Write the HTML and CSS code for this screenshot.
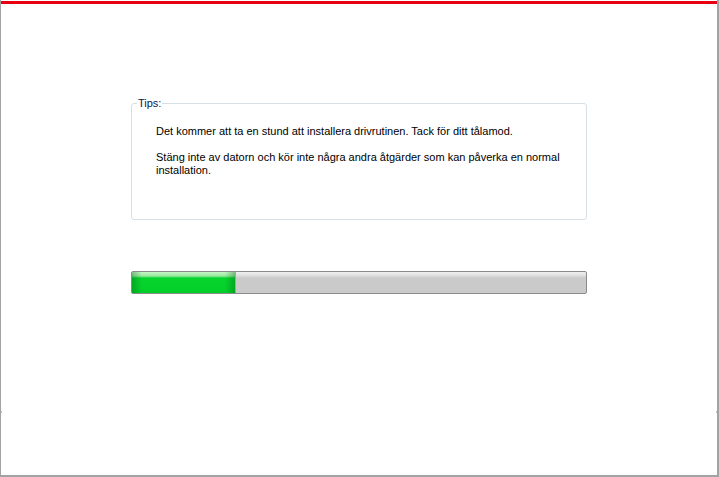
FILE: index.html
```html
<!DOCTYPE html>
<html>
<head>
<meta charset="utf-8">
<link rel="stylesheet" href="styles.css">
</head>
<body>
<div class="window">
  <div class="accent"></div>
  <div class="content">
    <fieldset class="tips">
      <legend>Tips:</legend>
      <p>Det kommer att ta en stund att installera drivrutinen. Tack för ditt tålamod.</p>
      <p>Stäng inte av datorn och kör inte några andra åtgärder som kan påverka en normal installation.</p>
    </fieldset>
    <div class="progress">
      <div class="fill" style="width:103px"></div>
    </div>
  </div>
  <div class="footer"></div>
</div>
</body>
</html>
```
FILE: styles.css
```css
html, body {
  margin: 0;
  padding: 0;
  background: #ffffff;
}
.window {
  width: 716px;
  height: 475px;
  border-left: 1px solid #a3a3a3;
  border-right: 2px solid #a3a3a3;
  border-bottom: 2px solid #a3a3a3;
  display: flex;
  flex-direction: column;
  font-family: "Liberation Sans", Arial, sans-serif;
  font-size: 11px;
  color: #000;
  position: relative;
}
.accent {
  height: 3px;
  margin-top: 1px;
  background: #e60012;
}
.content {
  flex: 1;
  padding: 93px 0 0 130px;
  display: flex;
  flex-direction: column;
}
.tips {
  margin: 0;
  width: 456px;
  height: 123px;
  border: 1px solid #d5dfe5;
  border-radius: 3px;
  padding: 0 10px 0 24px;
  box-sizing: border-box;
}
.tips legend {
  padding: 0 1px;
  margin-left: -19px;
  line-height: 13px;
  color: #0c1651;
}
.tips p {
  margin: 15px 0 0 0;
  line-height: 13px;
}
.tips p + p {
  margin-top: 13px;
}
.progress {
  margin-top: 51px;
  width: 454px;
  height: 21px;
  border: 1px solid #8a8a8a;
  border-radius: 2px;
  background: linear-gradient(#f0f0f0 0, #e2e2e2 3px, #cacaca 6px, #cbcbcb 100%);
  display: flex;
}
.fill {
  height: 100%;
  background:
    linear-gradient(90deg, rgba(0,90,20,0.35) 0, rgba(0,0,0,0) 10px, rgba(0,0,0,0) calc(100% - 10px), rgba(0,90,20,0.35) 100%),
    linear-gradient(#c6f5c8 0, #9aea9f 4px, #08d42e 6px, #02d029 100%);
  border-right: 1px solid #a6a6a6;
}
.footer {
  height: 64px;
  position: relative;
}
.footer::before, .footer::after {
  content: "";
  position: absolute;
  top: 0;
  width: 1px;
  height: 2px;
  background: #c0c0c0;
}
.footer::before { left: 0; }
.footer::after { right: 0; }
```
